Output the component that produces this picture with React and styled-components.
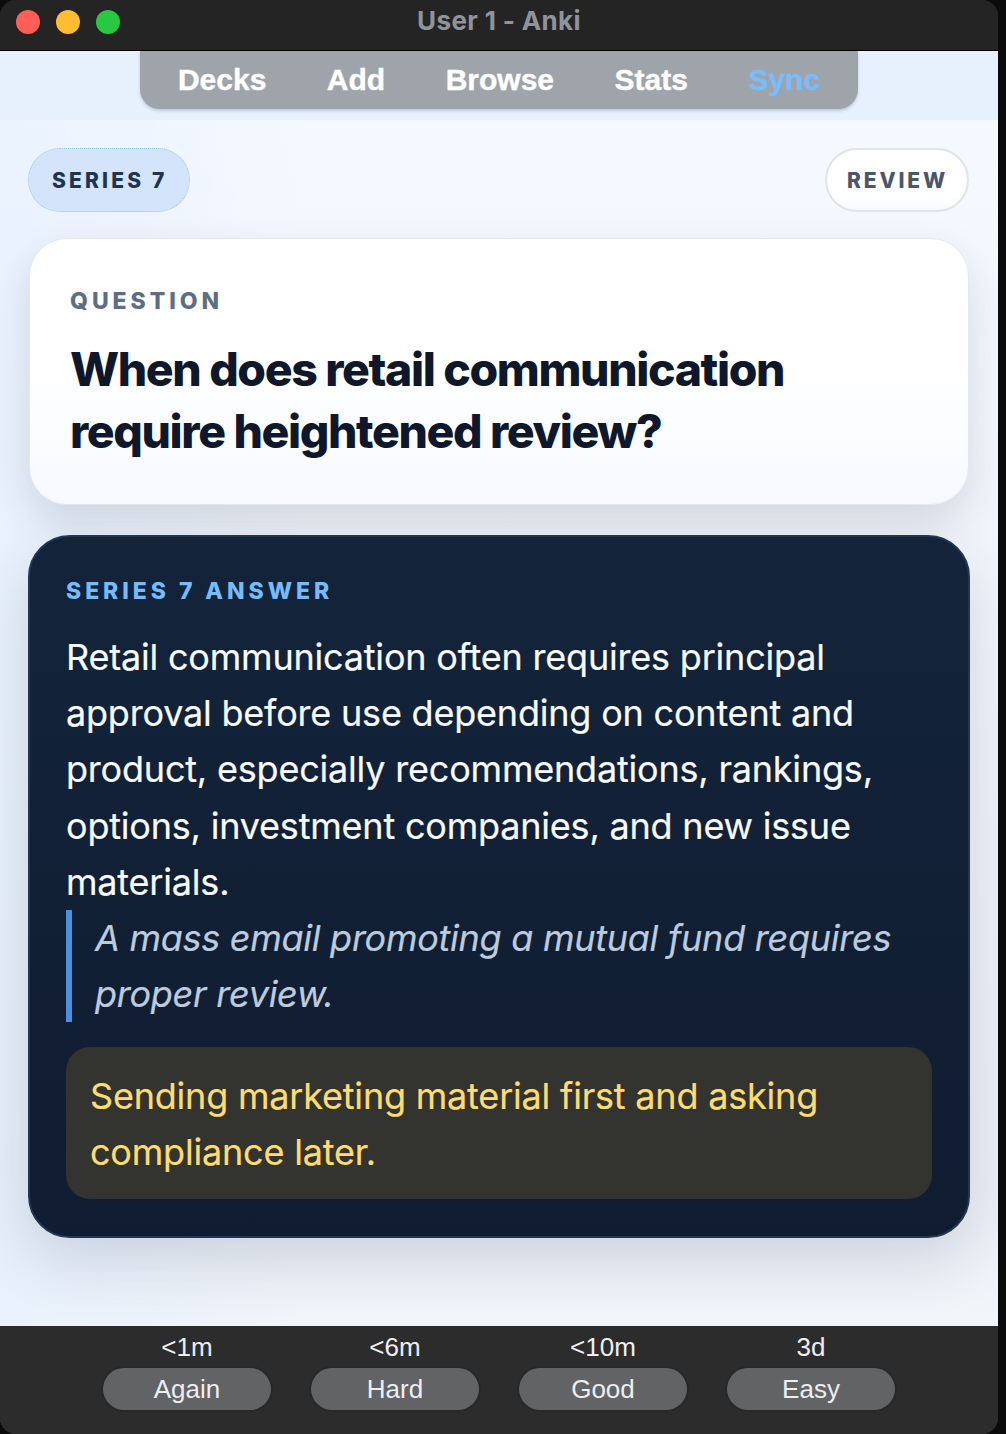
import styled, { createGlobalStyle } from "styled-components";

const Global = createGlobalStyle`
  html, body {
    margin: 0;
    padding: 0;
    background: #0b0b0b;
  }
  * { box-sizing: border-box; }
`
const Screen = styled.div`
  width: 1006px;
  height: 1434px;
  overflow: hidden;
  background: #0b0b0b;
`
const Window = styled.div`
  width: 998px;
  height: 1434px;
  display: flex;
  flex-direction: column;
  overflow: hidden;
  border-radius: 16px;
  background: #2c2c2c;
`
const TitleBar = styled.div`
  position: relative;
  flex: none;
  height: 51px;
  display: flex;
  align-items: center;
  justify-content: center;
  background: #242424;
  border-bottom: 1px solid #000;
  font-family: Inter, sans-serif;
  font-size: 26px;
  font-weight: 700;
  letter-spacing: 0.35px;
  color: #8f949c;
  padding-bottom: 10px;
`
const Lights = styled.div`
  position: absolute;
  left: 16px;
  top: 10px;
  display: flex;
  gap: 16px;
`
const Light = styled.span`
  width: 24px;
  height: 24px;
  border-radius: 50%;
  background: ${p => p.$color};
`
const Page = styled.div`
  flex: 1;
  display: flex;
  flex-direction: column;
  background:
    linear-gradient(90deg, rgba(226, 239, 254, 0.6) 0, rgba(226, 239, 254, 0) 30%),
    linear-gradient(180deg, #f6f9ff 0%, #eceff5 88%, #f2f5fa 100%);
`
const TopBand = styled.div`
  flex: none;
  height: 69px;
  display: flex;
  justify-content: center;
  background: #e6f1fd;
`
const Nav = styled.nav`
  width: 718px;
  height: 58px;
  display: flex;
  justify-content: center;
  align-items: center;
  gap: 60.5px;
  background: #9fa4ab;
  border-radius: 0 0 20px 20px;
  box-shadow: 0 2px 3px rgba(120, 130, 145, 0.35);
  font-family: "Liberation Sans", Arial, sans-serif;
  font-size: 30px;
  font-weight: 700;
  -webkit-text-stroke: 0.4px currentColor;
`
const NavItem = styled.span`
  color: ${p => p.$active ? "#78bdff" : "#fff"};
`
const Content = styled.div`
  flex: 1;
  display: flex;
  flex-direction: column;
  padding: 28px 28px 0 28px;
`
const ChipRow = styled.div`
  display: flex;
  justify-content: space-between;
  width: 941px;
  height: 64px;
`
const Chip = styled.div`
  height: 64px;
  display: flex;
  align-items: center;
  padding: ${p => p.$tone === "blue" ? "0 22px 0 23px" : "0 19px 0 20px"};
  border-radius: 32px;
  border: ${p => p.$tone === "blue" ? "1.5px dotted #93c5f8" : "2px solid #dfe4ea"};
  background: ${p => p.$tone === "blue" ? "#d4e4fb" : "linear-gradient(180deg, #fff 75%, #f6f9fd 100%)"};
  color: ${p => p.$tone === "blue" ? "#20344f" : "#4b5668"};
  font-family: Inter, sans-serif;
  font-size: 21px;
  font-weight: 800;
  letter-spacing: ${p => p.$tone === "blue" ? "3.15px" : "2.85px"};
`
const QuestionCard = styled.section`
  margin: 26px 0 0 1px;
  width: 940px;
  height: 267px;
  padding: 48px 40px 0 40px;
  border-radius: 38px;
  border: 1px solid #e2e8f0;
  background: linear-gradient(180deg, #fff 0%, #fff 50%, #f6f9fe 100%);
  box-shadow: 0 18px 40px rgba(40, 55, 75, 0.15);
`
const Eyebrow = styled.div`
  font-family: Inter, sans-serif;
  font-size: 23px;
  font-weight: 800;
  line-height: 28px;
  letter-spacing: 3.95px;
  color: ${p => p.$color};
`
const Question = styled.h1`
  margin: 23px 0 0 0;
  font-family: Inter, sans-serif;
  font-size: 46.4px;
  font-weight: 800;
  line-height: 62px;
  letter-spacing: -1.38px;
  color: #0f172a;
`
const AnswerCard = styled.section`
  margin-top: 30px;
  width: 942px;
  height: 703px;
  padding: 40px 36px 0 36px;
  border-radius: 42px;
  border: 2px solid #223650;
  background: linear-gradient(180deg, #13243a 0%, #101c31 100%);
  box-shadow: 0 24px 60px rgba(40, 55, 85, 0.16);
`
const Body = styled.p`
  margin: 24px 0 0 0;
  font-family: Inter, sans-serif;
  font-size: 36px;
  line-height: 56.2px;
  letter-spacing: -0.2px;
  color: #f7fafc;
  -webkit-text-stroke: 0.2px currentColor;
`
const Example = styled.blockquote`
  margin: 0;
  padding-left: 23px;
  border-left: 6px solid #4a90e2;
  font-family: Inter, sans-serif;
  font-size: 36px;
  font-style: italic;
  line-height: 56px;
  letter-spacing: -0.27px;
  color: #bccbdd;
  -webkit-text-stroke: 0.2px currentColor;
`
const Warning = styled.div`
  margin-top: 25px;
  height: 152px;
  padding: 21px 24px 0 24px;
  border-radius: 24px;
  background: #33332f;
  font-family: Inter, sans-serif;
  font-size: 36px;
  line-height: 56px;
  letter-spacing: -0.2px;
  color: #fddc72;
  -webkit-text-stroke: 0.2px currentColor;
`
const AnswerBar = styled.div`
  flex: none;
  height: 108px;
  display: flex;
  justify-content: center;
  gap: 40px;
  padding: 8px 0 0 0;
  background: #2c2c2c;
`
const AnswerCol = styled.div`
  width: 168px;
  display: flex;
  flex-direction: column;
  align-items: center;
  font-family: "Liberation Sans", Arial, sans-serif;
  color: #eceef2;
`
const Due = styled.div`
  font-size: 26px;
  line-height: 26px;
  height: 34px;
`
const EaseButton = styled.button`
  width: 168px;
  height: 42px;
  border: none;
  padding: 0;
  border-radius: 21px;
  background: #616365;
  box-shadow: 0 0 0 2px #282828;
  color: #eceef2;
  font-family: "Liberation Sans", Arial, sans-serif;
  font-size: 26px;
`

const answers = [
  { due: "<1m", label: "Again" },
  { due: "<6m", label: "Hard" },
  { due: "<10m", label: "Good" },
  { due: "3d", label: "Easy" },
];

const App = () => {
  return (
    <Screen>
      <Global />
      <Window>
        <TitleBar>
          <Lights>
            <Light $color="#ff5f57" />
            <Light $color="#febc2e" />
            <Light $color="#28c840" />
          </Lights>
          User 1 - Anki
        </TitleBar>
        <Page>
          <TopBand>
            <Nav>
              <NavItem>Decks</NavItem>
              <NavItem>Add</NavItem>
              <NavItem>Browse</NavItem>
              <NavItem>Stats</NavItem>
              <NavItem $active>Sync</NavItem>
            </Nav>
          </TopBand>
          <Content>
            <ChipRow>
              <Chip $tone="blue">SERIES 7</Chip>
              <Chip>REVIEW</Chip>
            </ChipRow>
            <QuestionCard>
              <Eyebrow $color="#5c6d84">QUESTION</Eyebrow>
              <Question>When does retail communication<br />require heightened review?</Question>
            </QuestionCard>
            <AnswerCard>
              <Eyebrow $color="#74bcff">SERIES 7 ANSWER</Eyebrow>
              <Body>Retail communication often requires principal approval before use depending on content and product, especially recommendations, rankings, options, investment companies, and new issue materials.</Body>
              <Example>A mass email promoting a mutual fund requires proper review.</Example>
              <Warning>Sending marketing material first and asking compliance later.</Warning>
            </AnswerCard>
          </Content>
        </Page>
        <AnswerBar>
          {answers.map(a => (
            <AnswerCol key={a.label}>
              <Due>{a.due}</Due>
              <EaseButton>{a.label}</EaseButton>
            </AnswerCol>
          ))}
        </AnswerBar>
      </Window>
    </Screen>
  )
}

export default App;
